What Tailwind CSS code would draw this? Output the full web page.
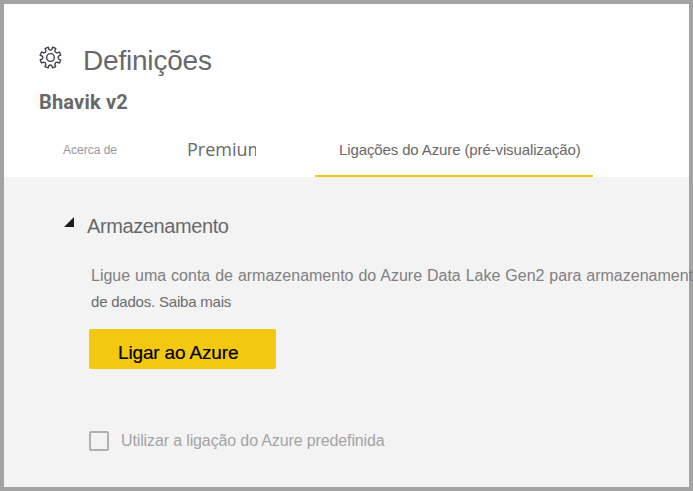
<!DOCTYPE html>
<html lang="pt">
<head>
<meta charset="utf-8">
<title>Definições</title>
<script src="https://cdn.jsdelivr.net/npm/@tailwindcss/browser@4"></script>
</head>
<body class="overflow-hidden bg-[#a3a3a3] font-['Liberation_Sans',Arial,sans-serif]">
<div class="h-[491px] w-[693px] border-4 border-[#a3a3a3] bg-[#f3f3f3] whitespace-nowrap">
  <header class="flex h-[173px] flex-col bg-white text-[#68686b]">
    <div class="flex h-[76px] items-end pl-[35px]">
      <svg class="mb-[11px] h-[23px] w-[23px] shrink-0" viewBox="0 0 24 24" fill="none" stroke="#3c3c48" stroke-width="1.4" stroke-linejoin="round">
        <path d="M9.8 1.2 L10.3 3.7 Q11.9 5 13.4 3.7 L14.1 1.2 L17.6 2.6 L16.4 4.9 Q16.9 7.1 19 7.3 L21.4 6.3 L22.7 9.6 L20.4 10.5 Q19.2 12 20.4 13.5 L22.7 14.6 L21.3 17.9 L18.9 16.9 Q16.9 17.2 16.4 19.1 L17.4 21.5 L14.1 22.8 L13.3 20.4 Q11.8 19.2 10.3 20.4 L9.6 22.8 L6.2 21.4 L7.2 19.1 Q7 17.1 4.9 16.9 L2.6 17.7 L1.2 14.4 L3.5 13.4 Q4.8 12 3.5 10.5 L1.2 9.7 L2.7 6.2 L5 7.2 Q7.1 7 7.3 5 L6.3 2.7 Z"/>
        <circle cx="12" cy="12" r="4"/>
      </svg>
      <h1 class="ml-[21px] text-[28px] leading-[38px] tracking-[-0.2px]">Definições</h1>
    </div>
    <h2 class="h-[42px] pl-[35px] pt-[8px] font-['Roboto',sans-serif] text-[20px] leading-[28px] font-bold tracking-[0.2px]">Bhavik v2</h2>
    <nav class="flex h-[55px]">
      <div class="ml-[59px] w-[124px] pt-[20px] text-[12px] leading-[16px] text-[#97979a]">Acerca de</div>
      <div class="w-[69px] overflow-hidden pt-[15px] font-['Open_Sans',sans-serif] text-[18px] leading-[24px]">Premium</div>
      <div class="ml-[59px] w-[278px] border-b-2 border-[#f2c811] pl-[24px] pt-[19px] text-[15px] leading-[18px] tracking-[-0.12px]">Ligações do Azure (pré-visualização)</div>
    </nav>
  </header>
  <main class="text-[#68686b]">
    <div class="flex h-[79px] pt-[37px]">
      <svg class="ml-[60px] mt-[3px] h-[10px] w-[10px]" viewBox="0 0 10 10"><path d="M10 0V10H0Z" fill="#1c1c20"/></svg>
      <h3 class="ml-[13px] text-[20px] leading-[24px] tracking-[-0.4px]">Armazenamento</h3>
    </div>
    <div class="pl-[87px] text-[#808082]">
      <p class="w-[602px] pt-[8px] text-[16px] leading-[24px] [text-align-last:justify]">Ligue uma conta de armazenamento do Azure Data Lake Gen2 para armazenament</p>
      <p class="pt-[4px] text-[15px] leading-[20px] tracking-[-0.21px] text-[#6c6c6f]">de dados. Saiba mais</p>
    </div>
    <button class="mt-[17px] ml-[85px] block h-[40px] w-[187px] rounded-[2px] bg-[#f2c811] pl-[29px] pt-[6px] text-left text-[19px] leading-[36px] tracking-[-0.16px] text-black [-webkit-text-stroke:0.2px_black]">Ligar ao Azure</button>
    <label class="mt-[62px] ml-[85px] flex h-[20px] items-center text-[16px] tracking-[-0.13px] text-[#a4a4a6]">
      <span class="mr-[12px] h-[20px] w-[20px] rounded-[2px] border-2 border-[#b0b0b0]"></span>
      <span>Utilizar a ligação do Azure predefinida</span>
    </label>
  </main>
</div>
</body>
</html>
